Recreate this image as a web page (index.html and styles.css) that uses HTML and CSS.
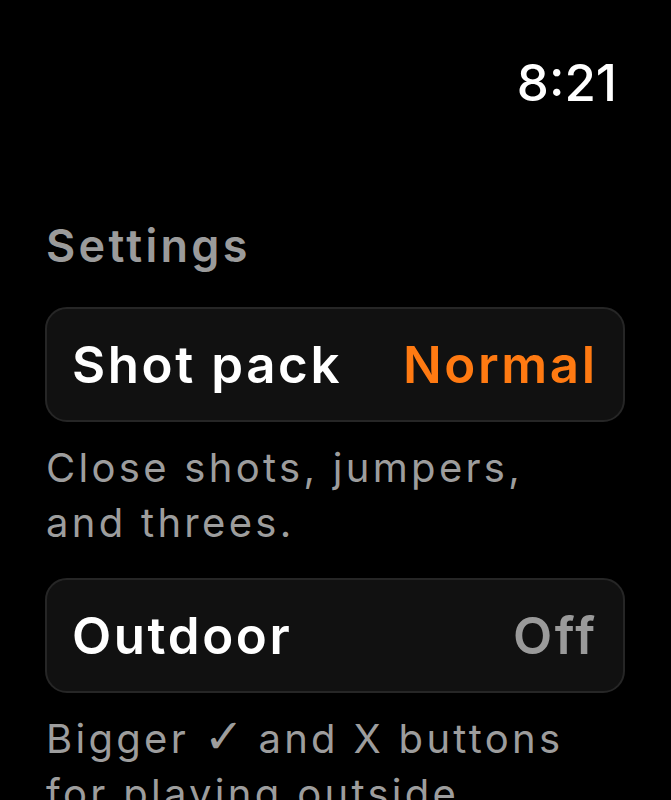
FILE: index.html
```html
<!DOCTYPE html>
<html lang="en">
<head>
<meta charset="utf-8">
<title>Settings</title>
<link rel="stylesheet" href="styles.css">
</head>
<body>
<main class="screen">
  <header class="status">
    <span class="time">8:21</span>
  </header>
  <h1 class="title">Settings</h1>
  <section class="setting">
    <div class="card">
      <span class="label">Shot pack</span>
      <span class="value value-accent">Normal</span>
    </div>
    <p class="desc">Close shots, jumpers,<br>and threes.</p>
  </section>
  <section class="setting">
    <div class="card">
      <span class="label">Outdoor</span>
      <span class="value value-muted">Off</span>
    </div>
    <p class="desc">Bigger <span class="check">✓</span> and X buttons<br>for playing outside.</p>
  </section>
</main>
</body>
</html>
```
FILE: styles.css
```css
html, body {
  margin: 0;
  padding: 0;
  background: #000;
}
body {
  font-family: Inter, "Noto Sans", "DejaVu Sans", sans-serif;
  color: #fff;
  overflow: hidden;
  height: 800px;
}
.screen {
  padding: 52px 46px 0 45px;
  display: flex;
  flex-direction: column;
}
.status {
  display: flex;
  justify-content: flex-end;
  padding-right: 8px;
}
.time {
  font-size: 51px;
  line-height: 62px;
  font-weight: 500;
  color: #fff;
}
.title {
  margin: 104px 0 0 1px;
  font-size: 45px;
  line-height: 56px;
  font-weight: 600;
  letter-spacing: 3.3px;
  color: #9b9b9b;
}
.setting {
  margin-top: 33px;
}
.setting + .setting {
  margin-top: 28px;
}
.card {
  box-sizing: border-box;
  height: 115px;
  display: flex;
  align-items: center;
  justify-content: space-between;
  padding: 0 28px 0 25px;
  background: #111111;
  border: 2px solid #262626;
  border-radius: 22px;
}
.label {
  font-size: 51px;
  line-height: 62px;
  font-weight: 600;
  letter-spacing: 2.6px;
  color: #fff;
}
.value {
  font-size: 51px;
  line-height: 62px;
  font-weight: 600;
  letter-spacing: 2.6px;
  margin-right: -2.6px;
}
.value-accent {
  color: #ff7a12;
}
.value-muted {
  color: #9a9a9a;
}
.desc {
  margin: 18px 0 0 1px;
  font-size: 40px;
  line-height: 55px;
  font-weight: 400;
  letter-spacing: 3.3px;
  color: #9d9d9d;
  white-space: nowrap;
}
.check {
  font-family: "DejaVu Sans", sans-serif;
  font-size: 48px;
  line-height: 40px;
  letter-spacing: 0;
}
```
